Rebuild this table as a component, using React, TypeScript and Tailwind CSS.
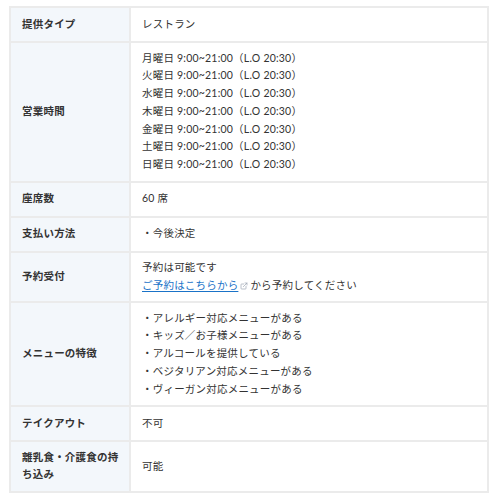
import React from 'react';
import { ExternalLink } from 'lucide-react';

const days = ['月', '火', '水', '木', '金', '土', '日'];

const menuFeatures = [
  'アレルギー対応メニューがある',
  'キッズ／お子様メニューがある',
  'アルコールを提供している',
  'ベジタリアン対応メニューがある',
  'ヴィーガン対応メニューがある',
];

const rows: { label: string; value: React.ReactNode }[] = [
  { label: '提供タイプ', value: 'レストラン' },
  {
    label: '営業時間',
    value: (
      <>
        {days.map((d) => (
          <div key={d}>{d}曜日 9:00~21:00（L.O 20:30）</div>
        ))}
      </>
    ),
  },
  { label: '座席数', value: '60 席' },
  { label: '支払い方法', value: '・今後決定' },
  {
    label: '予約受付',
    value: (
      <>
        <div>予約は可能です</div>
        <div>
          <a href="#" className="text-[#1a73c8] underline underline-offset-2">
            ご予約はこちらから
          </a>
          <ExternalLink className="inline-block w-[8px] h-[8px] text-gray-400 mx-[2px] align-middle" strokeWidth={2} />
          から予約してください
        </div>
      </>
    ),
  },
  {
    label: 'メニューの特徴',
    value: (
      <>
        {menuFeatures.map((f) => (
          <div key={f}>・{f}</div>
        ))}
      </>
    ),
  },
  { label: 'テイクアウト', value: '不可' },
  { label: '離乳食・介護食の持ち込み', value: '可能' },
];

export default function App() {
  return (
    <div
      className="bg-white pt-[6px] px-[9px] text-[#333] text-[10.5px] leading-[17.8px] tracking-[0.02em]"
      style={{ fontFamily: 'Lato, "Noto Sans CJK JP", sans-serif' }}
    >
      <table className="w-full border-collapse border-2 border-[#ebebeb]">
        <tbody>
          {rows.map((row) => (
            <tr key={row.label} className="h-[35px]">
              <th className="w-[120px] bg-[#f3f7fb] border-2 border-[#ebebeb] pl-[11px] pr-[2px] py-[6.5px] text-left align-middle font-bold">
                {row.label}
              </th>
              <td className="border-2 border-[#ebebeb] px-[11px] py-[6.5px] align-middle">{row.value}</td>
            </tr>
          ))}
        </tbody>
      </table>
    </div>
  );
}
